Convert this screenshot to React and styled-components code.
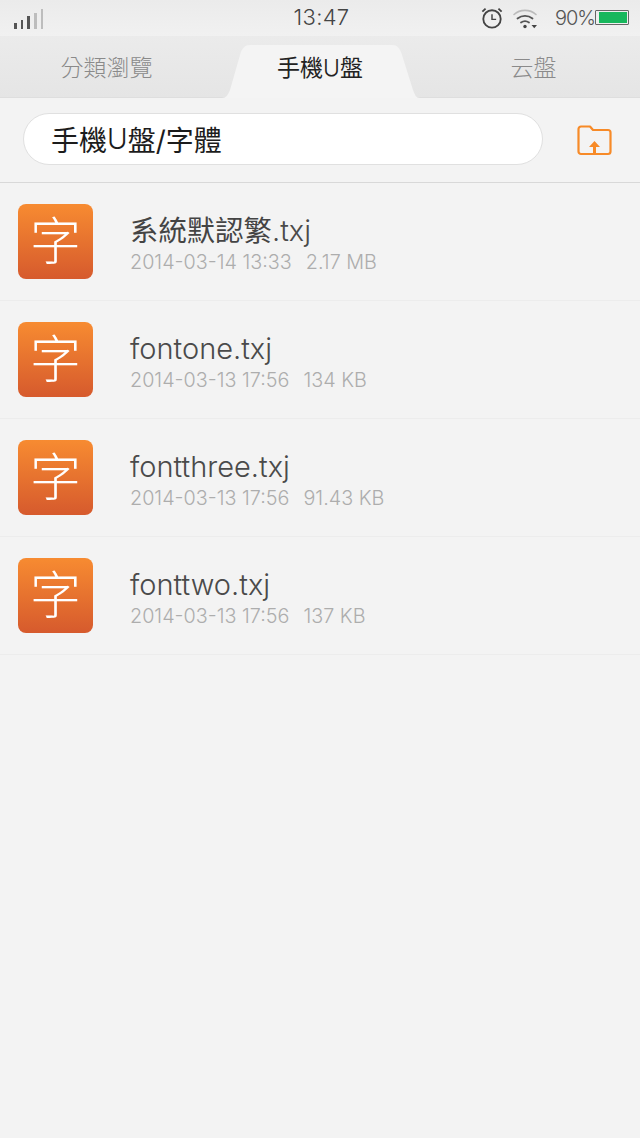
import React from "react";
import styled, { createGlobalStyle } from "styled-components";

const CJK = `"Inter", "Noto Sans CJK TC", sans-serif`;

const files = [
  { cjk: "系統默認繁", name: ".txj", date: "2014-03-14 13:33", size: "2.17 MB" },
  { name: "fontone.txj", date: "2014-03-13 17:56", size: "134 KB" },
  { name: "fontthree.txj", date: "2014-03-13 17:56", size: "91.43 KB" },
  { name: "fonttwo.txj", date: "2014-03-13 17:56", size: "137 KB" },
];

const GlobalStyle = createGlobalStyle`
  html, body {
    margin: 0;
    padding: 0;
    background: #f3f3f3;
  }
  * {
    box-sizing: border-box;
  }
`;

const Page = styled.div`
  width: 640px;
  height: 1138px;
  overflow: hidden;
  background: #f3f3f3;
  font-family: ${CJK};
  font-weight: 300;
`;

const StatusBar = styled.div`
  height: 36px;
  display: grid;
  grid-template-columns: 1fr auto 1fr;
  align-items: center;
  padding: 0 11px 0 14px;
  background: linear-gradient(#ebebeb, #f1f1f1);
`;

const Signal = styled.div`
  display: flex;
  align-items: flex-end;
  gap: 4px;
  height: 21px;
`;

const SignalBar = styled.span`
  width: 2.7px;
  height: ${(p) => p.$h}px;
  background: ${(p) => (p.$on ? "#555" : "#bdbdbd")};
`;

const Clock = styled.div`
  font-size: 22px;
  color: #444;
  letter-spacing: 0.3px;
  margin-top: -2px;
`;

const StatusRight = styled.div`
  display: flex;
  align-items: center;
  justify-content: flex-end;
  gap: 9px;
  margin-top: -1px;
`;

const BatteryGroup = styled.div`
  display: flex;
  align-items: center;
  margin-left: 8px;
`;

const Percent = styled.span`
  font-size: 20px;
  color: #555;
  letter-spacing: -1px;
`;

const Battery = styled.div`
  width: 34px;
  height: 15px;
  padding: 1px 1px 1px 3px;
  border: 1px solid #666;
  border-radius: 1px;
`;

const BatteryFill = styled.div`
  height: 100%;
  width: 100%;
  background: #17b75c;
`;

const Tabs = styled.div`
  height: 62px;
  display: grid;
  grid-template-columns: 213px 214px 213px;
  background: linear-gradient(#ebebeb, #e5e5e5);
  border-bottom: 1px solid #dedede;
`;

const Tab = styled.div`
  position: relative;
  display: flex;
  align-items: center;
  justify-content: center;
  padding-bottom: 2px;
  font-size: 23px;
  color: ${(p) => (p.$active ? "#222" : "#8a8a8a")};
  font-weight: ${(p) => (p.$active ? 400 : 300)};
`;

const TabLabel = styled.span`
  position: relative;
`;

const TabShape = styled.svg`
  position: absolute;
  left: 9px;
  top: 8px;
`;

const ThinLetter = styled.span`
  font-weight: 300;
`;

const PathBar = styled.div`
  height: 85px;
  display: flex;
  align-items: center;
  justify-content: space-between;
  padding: 0 27px 0 23px;
  border-bottom: 1px solid #d8d8d8;
`;

const PathField = styled.div`
  width: 520px;
  height: 52px;
  display: flex;
  align-items: center;
  padding: 0 0 0 27px;
  margin-top: -2px;
  border: 1px solid #e0e0e0;
  border-radius: 26px;
  background: #fff;
  font-size: 28px;
  color: #1c1c1c;
  font-weight: 400;
  white-space: pre;
`;

const FileList = styled.div`
  display: flex;
  flex-direction: column;
`;

const FileRow = styled.div`
  height: 118px;
  display: flex;
  align-items: center;
  padding: 0 0 1px 18px;
  border-bottom: 1px solid #ececec;
`;

const FileIcon = styled.div`
  width: 75px;
  height: 75px;
  display: flex;
  align-items: center;
  justify-content: center;
  flex-shrink: 0;
  border-radius: 8px;
  background: linear-gradient(#f78b31, #d65a2d);
  color: #fff;
  font-size: 51px;
  font-weight: 300;
  line-height: 1;
`;

const FileInfo = styled.div`
  margin-left: 37px;
  padding-top: 6px;
  display: flex;
  flex-direction: column;
`;

const FileName = styled.div`
  font-size: 29px;
  line-height: 36px;
  color: #4a4a4a;
`;

const CjkStem = styled.span`
  font-size: 28.4px;
  font-weight: 400;
  color: #444;
`;

const FileMeta = styled.div`
  display: flex;
  gap: 14px;
  font-size: 19.8px;
  line-height: 26px;
  color: #adadad;
`;

const AlarmIcon = () => (
  <svg width="22" height="22" viewBox="0 0 24 24" fill="none" stroke="#444" strokeWidth="2">
    <circle cx="12" cy="13" r="9.500" />
    <path d="M12 8v5.500h4.500" strokeWidth="1.600" />
    <path d="M1.500 5 5 1.800M22.500 5 19 1.800" />
  </svg>
);

const WifiIcon = () => (
  <svg width="26" height="24" viewBox="0 0 26 24" fill="none" strokeLinecap="round">
    <path d="M2 8.500C8 3 18 3 24 8.500" stroke="#bbb" strokeWidth="1.600" />
    <path d="M5.500 12.500C10 9 16 9 20.500 12.500" stroke="#555" strokeWidth="1.800" />
    <path d="M9 16.500C11.500 14.800 14.500 14.800 17 16.500" stroke="#555" strokeWidth="1.800" />
    <circle cx="13" cy="20.500" r="1.700" fill="#444" />
    <path d="M19.500 19h5.500l-2.750 3.200z" fill="#444" />
  </svg>
);

const UploadFolderIcon = () => (
  <svg width="36" height="31" viewBox="0 0 36 31" fill="none">
    <path
      d="M1.500 4a2.500 2.500 0 0 1 2.500-2.500h9l3 3.500h15a2.500 2.500 0 0 1 2.500 2.500v19a2.500 2.500 0 0 1-2.500 2.500h-27a2.500 2.500 0 0 1-2.500-2.500z"
      stroke="#f78a27"
      strokeWidth="2.200"
      strokeLinejoin="round"
    />
    <path d="M17.500 16l5.500 6h-4v7h-3v-7h-4z" fill="#f78a27" />
  </svg>
);

const App = () => (
  <Page>
    <GlobalStyle />
    <StatusBar>
      <Signal>
        <SignalBar $on $h={6} />
        <SignalBar $on $h={9} />
        <SignalBar $on $h={13} />
        <SignalBar $h={16} />
        <SignalBar $h={20} />
      </Signal>
      <Clock>13:47</Clock>
      <StatusRight>
        <AlarmIcon />
        <WifiIcon />
        <BatteryGroup>
          <Percent>90%</Percent>
          <Battery>
            <BatteryFill />
          </Battery>
        </BatteryGroup>
      </StatusRight>
    </StatusBar>
    <Tabs>
      <Tab>分類瀏覽</Tab>
      <Tab $active>
        <TabShape width="198" height="54" viewBox="0 0 198 54">
          <path
            d="M0 54C4 54 6 51 8 46L18 11C20 4 23 1 28 1H170C175 1 178 4 180 11L191 46C193 51 194 54 198 54Z"
            fill="#f4f4f4"
          />
        </TabShape>
        <TabLabel>
          手機<ThinLetter>U</ThinLetter>盤
        </TabLabel>
      </Tab>
      <Tab>云盤</Tab>
    </Tabs>
    <PathBar>
      <PathField>
        手機<ThinLetter>U</ThinLetter>盤/字體
      </PathField>
      <UploadFolderIcon />
    </PathBar>
    <FileList>
      {files.map((file) => (
        <FileRow key={file.name + file.size}>
          <FileIcon>字</FileIcon>
          <FileInfo>
            <FileName>
              {file.cjk && <CjkStem>{file.cjk}</CjkStem>}
              {file.name}
            </FileName>
            <FileMeta>
              <span>{file.date}</span>
              <span>{file.size}</span>
            </FileMeta>
          </FileInfo>
        </FileRow>
      ))}
    </FileList>
  </Page>
);

export default App;
